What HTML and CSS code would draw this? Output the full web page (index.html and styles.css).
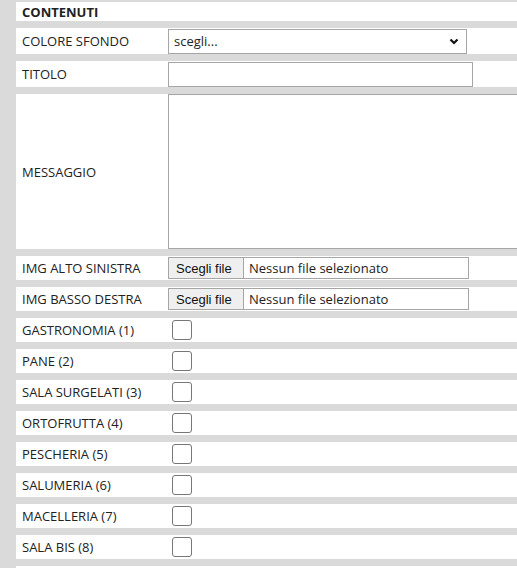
FILE: index.html
```html
<!DOCTYPE html>
<html lang="it">
<head>
    <meta charset="UTF-8">
    <meta name="viewport" content="width=device-width, initial-scale=1.0">
    <title>Contenuti</title>
    <link rel="stylesheet" href="styles.css">
</head>
<body>
    <form class="form">
        <div class="row head">
            <div class="label">CONTENUTI</div>
            <div class="field"></div>
        </div>

        <div class="row tall">
            <div class="label">COLORE SFONDO</div>
            <div class="field">
                <span class="select-wrap">
                    <select class="select" name="colore">
                        <option>scegli...</option>
                        <option>bianco</option>
                        <option>giallo</option>
                        <option>rosso</option>
                    </select>
                    <svg class="chevron" width="10" height="7" viewBox="0 0 10 7"><polyline points="1.5,1.5 5,5 8.5,1.5" fill="none" stroke="#111" stroke-width="2.2"/></svg>
                </span>
            </div>
        </div>

        <div class="row tall">
            <div class="label">TITOLO</div>
            <div class="field"><input class="text" type="text" name="titolo"></div>
        </div>

        <div class="row message">
            <div class="label">MESSAGGIO</div>
            <div class="field"><textarea class="area" name="messaggio"></textarea></div>
        </div>

        <div class="row">
            <div class="label">IMG ALTO SINISTRA</div>
            <div class="field">
                <label class="file">
                    <span class="file-btn">Scegli file</span>
                    <span class="file-name">Nessun file selezionato</span>
                    <input type="file" name="img_alto" hidden>
                </label>
            </div>
        </div>

        <div class="row">
            <div class="label">IMG BASSO DESTRA</div>
            <div class="field">
                <label class="file">
                    <span class="file-btn">Scegli file</span>
                    <span class="file-name">Nessun file selezionato</span>
                    <input type="file" name="img_basso" hidden>
                </label>
            </div>
        </div>

        <div class="row">
            <div class="label">GASTRONOMIA (1)</div>
            <div class="field"><input class="check" type="checkbox" name="reparto" value="1"></div>
        </div>
        <div class="row">
            <div class="label">PANE (2)</div>
            <div class="field"><input class="check" type="checkbox" name="reparto" value="2"></div>
        </div>
        <div class="row">
            <div class="label">SALA SURGELATI (3)</div>
            <div class="field"><input class="check" type="checkbox" name="reparto" value="3"></div>
        </div>
        <div class="row">
            <div class="label">ORTOFRUTTA (4)</div>
            <div class="field"><input class="check" type="checkbox" name="reparto" value="4"></div>
        </div>
        <div class="row">
            <div class="label">PESCHERIA (5)</div>
            <div class="field"><input class="check" type="checkbox" name="reparto" value="5"></div>
        </div>
        <div class="row">
            <div class="label">SALUMERIA (6)</div>
            <div class="field"><input class="check" type="checkbox" name="reparto" value="6"></div>
        </div>
        <div class="row">
            <div class="label">MACELLERIA (7)</div>
            <div class="field"><input class="check" type="checkbox" name="reparto" value="7"></div>
        </div>
        <div class="row">
            <div class="label">SALA BIS (8)</div>
            <div class="field"><input class="check" type="checkbox" name="reparto" value="8"></div>
        </div>
        <div class="row">
            <div class="label"></div>
            <div class="field"><input class="check" type="checkbox" name="reparto" value="9"></div>
        </div>
    </form>
</body>
</html>
```

FILE: styles.css
```css
body {
    margin: 0;
    padding: 0;
    background-color: #dadada;
    font-family: "Open Sans", Arial, sans-serif;
    font-size: 13px;
    color: #222;
    overflow: hidden;
}

.form {
    display: flex;
    flex-direction: column;
    gap: 7px;
    padding: 2px 0 0 16px;
    width: 600px;
}

.row {
    display: grid;
    grid-template-columns: 152px 1fr;
    align-items: center;
    height: 24px;
    background-color: #fff;
}

.row.head {
    height: 19px;
}

.row.head .label {
    font-weight: bold;
}

.row.tall {
    height: 26px;
}

.row.message {
    height: 155px;
}

.label {
    padding-left: 6px;
    white-space: nowrap;
}

.field {
    display: flex;
    align-items: center;
}

/* Select */
.select-wrap {
    position: relative;
    display: inline-block;
}

.select {
    appearance: none;
    -webkit-appearance: none;
    width: 299px;
    height: 25px;
    margin: 0;
    padding: 0 0 0 5px;
    border: 1px solid #a6a6a6;
    border-radius: 0;
    background-color: #fff;
    font-family: "Open Sans", Arial, sans-serif;
    font-size: 13px;
    color: #222;
}

.chevron {
    position: absolute;
    right: 8px;
    top: 9px;
    pointer-events: none;
}

.text {
    width: 305px;
    height: 25px;
    margin: 0;
    padding: 0 4px;
    box-sizing: border-box;
    border: 1px solid #a6a6a6;
    border-radius: 0;
    font-family: "Open Sans", Arial, sans-serif;
    font-size: 13px;
}

.area {
    width: 400px;
    height: 155px;
    margin: 0;
    box-sizing: border-box;
    border: 1px solid #a6a6a6;
    border-radius: 0;
    resize: none;
    font-family: "Open Sans", Arial, sans-serif;
    font-size: 13px;
}

/* File picker */
.file {
    display: flex;
    align-items: stretch;
    width: 301px;
    height: 22px;
    box-sizing: border-box;
    border: 1px solid #a6a6a6;
    background-color: #fff;
    cursor: pointer;
}

.file-btn {
    display: flex;
    align-items: center;
    padding: 0 7px;
    width: 75px;
    box-sizing: border-box;
    background-color: #efefef;
    border-right: 1px solid #a6a6a6;
    font-family: "Liberation Sans", Arial, sans-serif;
    font-size: 13px;
    color: #111;
}

.file-name {
    display: flex;
    align-items: center;
    padding-left: 5px;
    white-space: nowrap;
}

/* Checkbox */
.check {
    appearance: none;
    -webkit-appearance: none;
    width: 20px;
    height: 20px;
    margin: 0 0 0 4px;
    border: 1px solid #777;
    border-radius: 3px;
    background-color: #fff;
    cursor: pointer;
}

.check:checked {
    background-color: #0075ff;
    border-color: #0075ff;
}
```
